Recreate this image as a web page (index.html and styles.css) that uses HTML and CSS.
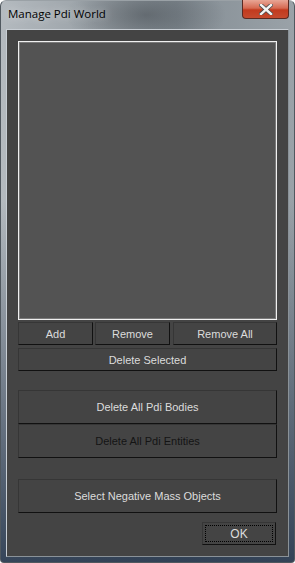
FILE: index.html
```html
<!DOCTYPE html>
<html lang="en">
<head>
    <meta charset="UTF-8">
    <title>Manage Pdi World</title>
    <link rel="stylesheet" href="styles.css">
</head>
<body>
    <div class="window">
        <div class="titlebar">
            <span class="title">Manage Pdi World</span>
            <div class="close">
                <svg width="14" height="11" viewBox="0 0 14 11">
                    <path d="M2 1 L12 10 M12 1 L2 10" stroke="#4a4a4a" stroke-width="4" stroke-linecap="square"/>
                    <path d="M2 1 L12 10 M12 1 L2 10" stroke="#f4f4f4" stroke-width="2.4" stroke-linecap="square"/>
                </svg>
            </div>
        </div>
        <div class="client">
            <div class="listbox"></div>
            <div class="row">
                <button class="btn add">Add</button>
                <button class="btn remove">Remove</button>
                <button class="btn removeall">Remove All</button>
            </div>
            <button class="btn full">Delete Selected</button>
            <div class="group">
                <button class="btn tall">Delete All Pdi Bodies</button>
                <button class="btn tall dark">Delete All Pdi Entities</button>
            </div>
            <button class="btn tall negative">Select Negative Mass Objects</button>
            <div class="footer">
                <button class="btn ok">OK</button>
            </div>
        </div>
    </div>
</body>
</html>
```

FILE: styles.css
```css
body {
    margin: 0;
    width: 295px;
    height: 563px;
    overflow: hidden;
    background: #ffffff;
    font-family: "Liberation Sans", Arial, sans-serif;
}
.window {
    width: 295px;
    height: 563px;
    box-sizing: border-box;
    padding: 0 5px 6px 5px;
    border-radius: 6px 6px 4px 4px;
    background:
        radial-gradient(ellipse 80px 36px at 145px 14px, rgba(60, 66, 72, 0.5), rgba(60, 66, 72, 0) 100%),
        linear-gradient(to bottom, rgba(0, 0, 0, 0) 0, rgba(0, 0, 0, 0) 200px, rgba(40, 56, 78, 0.9) 563px),
        linear-gradient(to right, #b4babf 0, #939ba1 40%, #848d94 60%, #9aa2a8 100%);
    border: 1px solid #50585f;
    border-top-color: #9aa1a6;
}
.titlebar {
    height: 28px;
    display: flex;
    justify-content: space-between;
    align-items: flex-start;
}
.title {
    font-family: "Open Sans", "DejaVu Sans", sans-serif;
    font-size: 11.5px;
    color: #000000;
    margin-top: 5px;
    margin-left: 2px;
    text-shadow: 0 0 8px rgba(255, 255, 255, 0.7);
}
.close {
    width: 45px;
    height: 18px;
    margin-right: 0;
    margin-top: -1px;
    border: 1px solid #5a2a22;
    border-top: none;
    border-radius: 0 0 4px 4px;
    background: linear-gradient(to bottom, #e8a696 0, #d66a52 45%, #c23a1e 55%, #c54a2e 100%);
    display: flex;
    align-items: center;
    justify-content: center;
}
.client {
    height: 528px;
    box-sizing: border-box;
    background: #444444;
    border: 1px solid #c8ced4;
    border-right-color: #8a9298;
    border-bottom-color: #8a9298;
    padding: 11px 11px 0 11px;
    display: flex;
    flex-direction: column;
}
.listbox {
    height: 279px;
    box-sizing: border-box;
    border: 1px solid #f0f0f0;
    background: #535353;
    box-shadow: inset 0 0 0 1px #7a7a7a;
}
.row {
    display: flex;
    margin-top: 2px;
    gap: 2px;
}
.btn {
    box-sizing: border-box;
    height: 23px;
    padding: 0;
    margin: 0;
    background: #444444;
    border: 1px solid #363636;
    border-right-color: #111111;
    border-bottom-color: #111111;
    color: #dcdcdc;
    font-family: "Liberation Sans", Arial, sans-serif;
    font-size: 11px;
}
.add {
    width: 75px;
}
.remove {
    width: 75px;
}
.removeall {
    flex: 1;
    margin-left: 1px;
}
.full {
    margin-top: 3px;
}
.group {
    display: flex;
    flex-direction: column;
    margin-top: 19px;
}
.tall {
    height: 34px;
}
.dark {
    color: #141414;
}
.negative {
    margin-top: 21px;
}
.footer {
    display: flex;
    justify-content: flex-end;
    margin-top: 9px;
    padding-right: 1px;
}
.ok {
    width: 74px;
    outline: 1px dotted #000000;
    outline-offset: -4px;
    font-size: 12px;
}
```
